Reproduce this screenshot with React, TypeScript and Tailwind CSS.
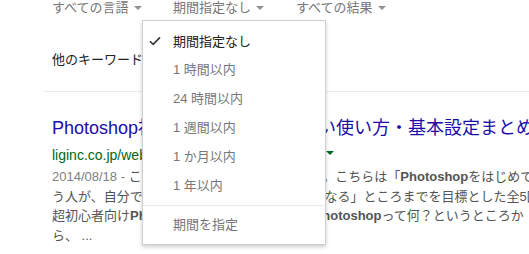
import React from 'react';

const font = "font-['Liberation_Sans','Noto_Sans_CJK_JP',sans-serif]";

const Caret = ({ className = 'border-t-[#909090]' }: { className?: string }) => (
  <span className={`inline-block w-0 h-0 border-l-[4px] border-r-[4px] border-t-[4px] border-l-transparent border-r-transparent ${className}`} />
);

const periods = ['1 時間以内', '24 時間以内', '1 週間以内', '1 か月以内', '1 年以内'];

export default function App() {
  return (
    <div className={`relative w-[529px] h-[254px] overflow-hidden bg-white ${font}`}>
      {/* Tool row */}
      <div className="flex items-center h-[16px] pl-[52px] text-[13px] leading-[16px] text-[#777]">
        <div className="flex items-center gap-[5px] w-[121px]">
          <span>すべての言語</span>
          <Caret />
        </div>
        <div className="flex items-center gap-[5px] w-[123px]">
          <span>期間指定なし</span>
          <Caret />
        </div>
        <div className="flex items-center gap-[5px]">
          <span>すべての結果</span>
          <Caret />
        </div>
      </div>

      {/* Other keywords */}
      <div className="mt-[34px] pl-[52px] text-[13px] leading-[20px] text-[#222] whitespace-nowrap">
        他のキーワード：
      </div>

      <div className="mt-[21px] ml-[43px] h-px bg-[#ebebeb]" />

      {/* Result */}
      <div className="pl-[52px] pt-[25px] whitespace-nowrap">
        <div className="text-[18px] leading-[22px] text-[#1a0dab]">
          Photoshop初心者向け！わかり易い使い方・基本設定まとめ
        </div>
        <div className="flex items-center mt-[7px] text-[14px] leading-[18px] text-[#006621]">
          <span className="w-[274px] overflow-hidden">liginc.co.jp/web/design/photoshop/1234</span>
          <Caret className="border-t-[#006621] -mt-[5px]" />
        </div>
        <div className="mt-[3px] text-[13px] leading-[19.5px] text-[#545454]">
          <div>
            <span className="text-[#808080]">2014/08/18 - </span>
            この記事は、初心者の方向けです。こちらは「<b>Photoshop</b>をはじめて使
          </div>
          <div>う人が、自分で写真を加工・編集できるようになる」ところまでを目標とした全5回の</div>
          <div>
            超初心者向け<b>Photoshop</b>講座です。まずは、<b>Photoshop</b>って何？というところか
          </div>
          <div>ら、 ...</div>
        </div>
      </div>

      {/* Period dropdown */}
      <div className="absolute left-[142px] top-[20px] w-[184px] h-[225px] bg-white border border-[#d0d0d0] shadow-[0_2px_4px_rgba(0,0,0,0.2)] pt-[6px] text-[13px]">
        <div className="relative flex items-center h-[28.8px] pl-[30px] text-[#222]">
          <svg className="absolute left-[6px] top-[9px]" width="12" height="10" viewBox="0 0 12 10">
            <path d="M1 5.2 L4.2 8.4 L11 1.4" fill="none" stroke="#333" strokeWidth="1.6" />
          </svg>
          期間指定なし
        </div>
        {periods.map((p) => (
          <div key={p} className="flex items-center h-[28.8px] pl-[30px] text-[#777]">
            {p}
          </div>
        ))}
        <div className="mt-[5px] h-px bg-[#ebebeb]" />
        <div className="flex items-center h-[28.8px] mt-[5px] pl-[30px] text-[#777]">期間を指定</div>
      </div>
    </div>
  );
}
